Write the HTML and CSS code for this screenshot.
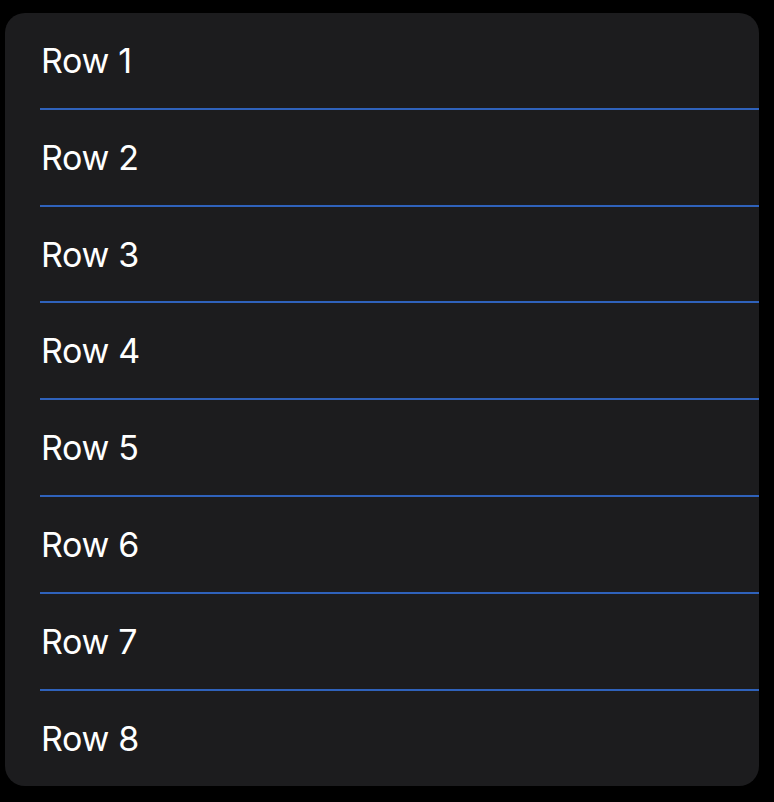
FILE: index.html
```html
<!DOCTYPE html>
<html>
<head>
<meta charset="utf-8">
<link rel="stylesheet" href="styles.css">
</head>
<body>
<div class="card">
  <div class="row"><span class="label">Row 1</span></div>
  <div class="row"><span class="label">Row 2</span></div>
  <div class="row short"><span class="label">Row 3</span></div>
  <div class="row"><span class="label">Row 4</span></div>
  <div class="row"><span class="label">Row 5</span></div>
  <div class="row"><span class="label">Row 6</span></div>
  <div class="row"><span class="label">Row 7</span></div>
  <div class="row last"><span class="label">Row 8</span></div>
</div>
</body>
</html>
```
FILE: styles.css
```css
html, body {
  margin: 0;
  padding: 0;
  background: #000;
}
body {
  padding: 13px 15px 0 5px;
  font-family: Inter, "Liberation Sans", sans-serif;
}
.card {
  width: 754px;
  background: #1c1c1e;
  border-radius: 20px;
  overflow: hidden;
}
.row {
  height: 97px;
  box-sizing: border-box;
  margin-left: 35px;
  display: flex;
  align-items: center;
  border-bottom: 2px solid #2f62bb;
}
.row.short {
  height: 96px;
}
.row.last {
  height: 95px;
  border-bottom: none;
}
.label {
  color: #fff;
  font-size: 34px;
  padding-left: 1px;
  letter-spacing: -0.3px;
}
```
